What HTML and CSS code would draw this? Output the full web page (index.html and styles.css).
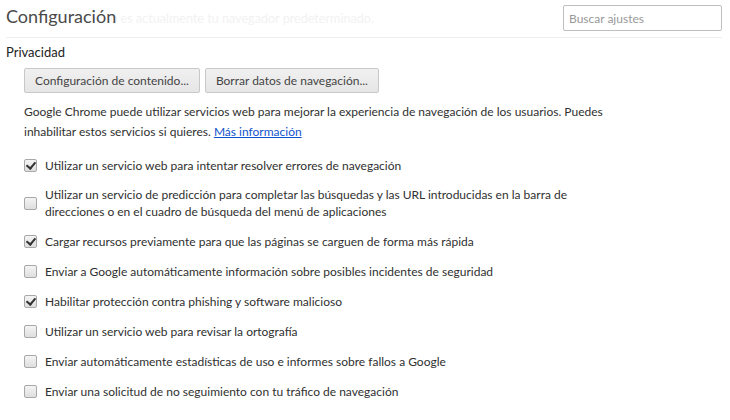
FILE: index.html
```html
<!DOCTYPE html>
<html lang="es">
<head>
<meta charset="utf-8">
<title>Configuración</title>
<link rel="stylesheet" href="styles.css">
</head>
<body>
<div class="page">
  <header class="header">
    <div class="title-wrap">
      <h1 class="title">Configuración</h1>
      <span class="ghost">o es actualmente tu navegador predeterminado.</span>
    </div>
    <input class="search" type="text" placeholder="Buscar ajustes">
  </header>
  <section class="section">
    <h3 class="section-title">Privacidad</h3>
    <div class="section-body">
      <div class="buttons">
        <button class="btn">Configuración de contenido...</button>
        <button class="btn">Borrar datos de navegación...</button>
      </div>
      <p class="desc">Google Chrome puede utilizar servicios web para mejorar la experiencia de navegación de los usuarios. Puedes inhabilitar estos servicios si quieres. <a href="#" class="link">Más información</a></p>
      <ul class="options">
        <li class="opt"><span class="cb checked"></span><span class="lbl">Utilizar un servicio web para intentar resolver errores de navegación</span></li>
        <li class="opt"><span class="cb"></span><span class="lbl">Utilizar un servicio de predicción para completar las búsquedas y las URL introducidas en la barra de direcciones o en el cuadro de búsqueda del menú de aplicaciones</span></li>
        <li class="opt"><span class="cb checked"></span><span class="lbl">Cargar recursos previamente para que las páginas se carguen de forma más rápida</span></li>
        <li class="opt"><span class="cb"></span><span class="lbl">Enviar a Google automáticamente información sobre posibles incidentes de seguridad</span></li>
        <li class="opt"><span class="cb checked"></span><span class="lbl">Habilitar protección contra phishing y software malicioso</span></li>
        <li class="opt"><span class="cb"></span><span class="lbl">Utilizar un servicio web para revisar la ortografía</span></li>
        <li class="opt"><span class="cb"></span><span class="lbl">Enviar automáticamente estadísticas de uso e informes sobre fallos a Google</span></li>
        <li class="opt"><span class="cb"></span><span class="lbl">Enviar una solicitud de no seguimiento con tu tráfico de navegación</span></li>
      </ul>
    </div>
  </section>
</div>
</body>
</html>
```
FILE: styles.css
```css
* { box-sizing: border-box; }
html, body { margin: 0; padding: 0; background: #fff; }
body {
  font-family: "Lato", "Noto Sans", sans-serif;
  font-size: 12px;
  color: #303030;
}
.page { padding: 0 8px 0 6px; }
.header {
  display: flex;
  align-items: center;
  justify-content: space-between;
  height: 38px;
  border-bottom: 1px solid #eee;
}
.title-wrap { display: flex; align-items: baseline; padding-bottom: 6px; }
.title {
  margin: 0;
  font-size: 18px;
  font-weight: normal;
  color: #4a4a4a;
  position: relative;
  z-index: 1;
}
.ghost {
  color: #f2f2f2;
  font-size: 12.6px;
  margin-left: -6px;
}
.search {
  width: 159px;
  height: 26px;
  margin-top: -1px;
  border: 1px solid #bfbfbf;
  border-radius: 2px;
  padding: 0 5px;
  font: inherit;
  font-size: 12px;
  color: #333;
}
.search::placeholder { color: #999; }
.section-title {
  margin: 6px 0 0;
  font-size: 13px;
  font-weight: normal;
  color: #222;
  line-height: 16px;
}
.section-body { padding-left: 18px; }
.buttons { display: flex; gap: 5px; margin-top: 8px; }
.btn {
  height: 25px;
  padding: 0 10px;
  border: 1px solid #c8c8c8;
  border-radius: 2px;
  background: linear-gradient(#f0f0f0, #e6e6e6);
  font: inherit;
  font-size: 12px;
  color: #444;
}
.desc {
  margin: 9px 0 0;
  line-height: 20px;
  width: 600px;
  color: #303030;
}
.link { color: #15c; }
.options { list-style: none; margin: 14px 0 0; padding: 0; width: 580px; }
.opt {
  display: flex;
  align-items: center;
  gap: 8px;
  min-height: 18px;
  margin-bottom: 12px;
  line-height: 17px;
}
.cb {
  flex: none;
  width: 13px;
  height: 13px;
  border: 1px solid #a8a8a8;
  border-radius: 2px;
  background: linear-gradient(#f4f4f4, #dedede);
  position: relative;
}
.cb.checked::after {
  content: "";
  position: absolute;
  left: 3px;
  top: 0px;
  width: 4px;
  height: 7px;
  border: solid #333;
  border-width: 0 2px 2px 0;
  transform: rotate(40deg);
}
.lbl { color: #303030; }
```
